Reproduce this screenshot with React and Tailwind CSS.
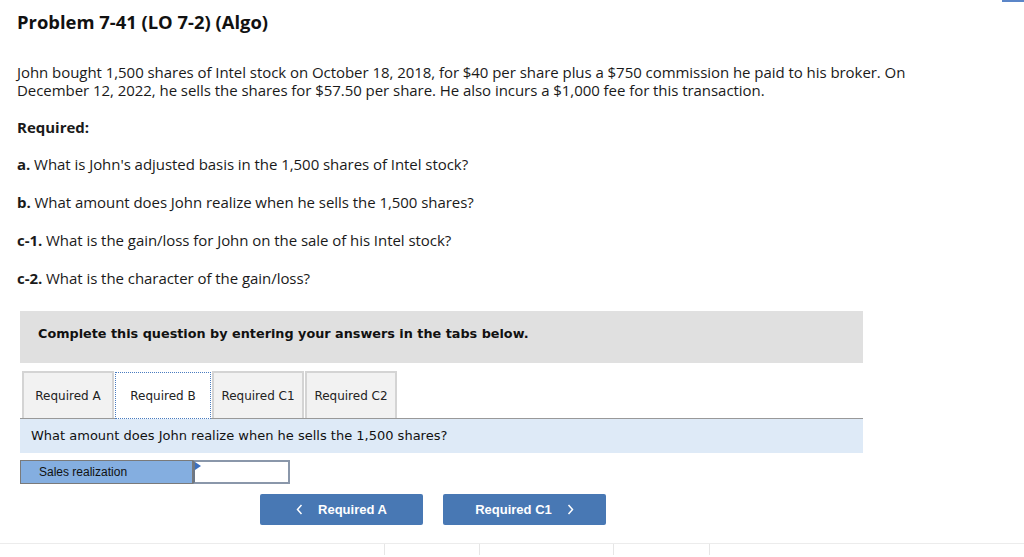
import React from 'react';

const body = { fontFamily: '"Open Sans", Lato, sans-serif' };
const verdana = { fontFamily: 'Verdana, "DejaVu Sans", sans-serif' };
const arial = { fontFamily: 'Arial, "Liberation Sans", sans-serif' };

const QUESTIONS = [
  ['a.', "What is John's adjusted basis in the 1,500 shares of Intel stock?"],
  ['b.', 'What amount does John realize when he sells the 1,500 shares?'],
  ['c-1.', 'What is the gain/loss for John on the sale of his Intel stock?'],
  ['c-2.', 'What is the character of the gain/loss?'],
];

const TABS = ['Required A', 'Required B', 'Required C1', 'Required C2'];

const Chevron = ({ dir }) => (
  <svg width="7" height="11" viewBox="0 0 7 11" fill="none" stroke="white" strokeWidth="1.5">
    {dir === 'left' ? <path d="M5.5 1 1.5 5.5 5.5 10" /> : <path d="M1.5 1 5.5 5.5 1.5 10" />}
  </svg>
);

const Tab = ({ label, active }) => (
  <div
    style={verdana}
    className={`h-[47px] flex items-center justify-center text-[12px] text-[#222] ${
      active
        ? 'w-[96px] bg-white border border-dotted border-[#4a7cc0] -mb-px relative z-10'
        : 'w-[92px] bg-[#f2f2f2] border-2 border-b-0 border-[#d4d4d4]'
    }`}
  >
    {label}
  </div>
);

export default function App() {
  return (
    <div className="relative w-[1024px] h-[557px] bg-white overflow-hidden text-[#1a1a1a]">
      <div className="absolute top-0 right-0 w-[22px] h-[2px] bg-[#5b86c8]" />

      <div className="pl-[17px] pt-[11px]" style={body}>
        <h1 className="text-[18.4px] font-bold leading-[22px] text-[#111]">Problem 7-41 (LO 7-2) (Algo)</h1>
        <p className="mt-[30px] text-[15px] leading-[18px] pr-[60px] tracking-[-0.05px]">
          John bought 1,500 shares of Intel stock on October 18, 2018, for $40 per share plus a $750 commission he paid to his broker. On
          <br />
          December 12, 2022, he sells the shares for $57.50 per share. He also incurs a $1,000 fee for this transaction.
        </p>
        <p className="mt-[19px] text-[15px] leading-[18px] font-bold">Required:</p>
        <div className="mt-[19px] flex flex-col gap-[20px]">
          {QUESTIONS.map(([k, q]) => (
            <p key={k} className="text-[15px] leading-[18px] tracking-[-0.05px]">
              <span className="font-bold">{k}</span> {q}
            </p>
          ))}
        </div>
      </div>

      <div className="ml-[20px] w-[843px] mt-[24px]">
        <div className="h-[52px] bg-[#e0e0e0] pl-[18px] pt-[15px]">
          <p style={verdana} className="text-[12.8px] font-bold leading-[16px] text-[#111]">
            Complete this question by entering your answers in the tabs below.
          </p>
        </div>

        <div className="mt-[8px] flex items-end gap-[1px] pl-[2px] border-b border-[#999]">
          {TABS.map((t) => (
            <Tab key={t} label={t} active={t === 'Required B'} />
          ))}
        </div>

        <div className="h-[34px] bg-[#deeaf7] pl-[11px] flex items-center">
          <p style={verdana} className="text-[13px] text-[#111]">What amount does John realize when he sells the 1,500 shares?</p>
        </div>

        <div className="mt-[7px] flex h-[24px]">
          <div style={arial} className="w-[173px] bg-[#84aee0] border border-[#7a7a7a] pl-[18px] flex items-center text-[12px] text-[#111]">
            Sales realization
          </div>
          <div className="relative w-[97px] bg-white border-2 border-[#8a97aa] border-l-[#6d7785]">
            <div className="absolute top-0 left-0 w-0 h-0 border-t-[4px] border-b-[4px] border-l-[6px] border-t-transparent border-b-transparent border-l-[#3b6fbf]" />
          </div>
        </div>

        <div className="mt-[10px] ml-[240px] flex gap-[20px]">
          <button style={arial} className="w-[163px] h-[31px] bg-[#4878b4] rounded-[2px] text-white text-[13px] font-bold flex items-center justify-center gap-[15px]">
            <Chevron dir="left" />
            <span>Required A</span>
          </button>
          <button style={arial} className="w-[163px] h-[31px] bg-[#4878b4] rounded-[2px] text-white text-[13px] font-bold flex items-center justify-center gap-[15px]">
            <span>Required C1</span>
            <Chevron dir="right" />
          </button>
        </div>
      </div>

      <div className="mt-[18px] border-t border-[#ececec] h-[12px] flex">
        <div className="w-[385px] border-r border-[#e6e6e6]" />
        <div className="w-[95px] border-r border-[#e6e6e6]" />
        <div className="w-[134px] border-r border-[#e6e6e6]" />
        <div className="w-[96px] border-r border-[#e6e6e6]" />
      </div>
    </div>
  );
}
